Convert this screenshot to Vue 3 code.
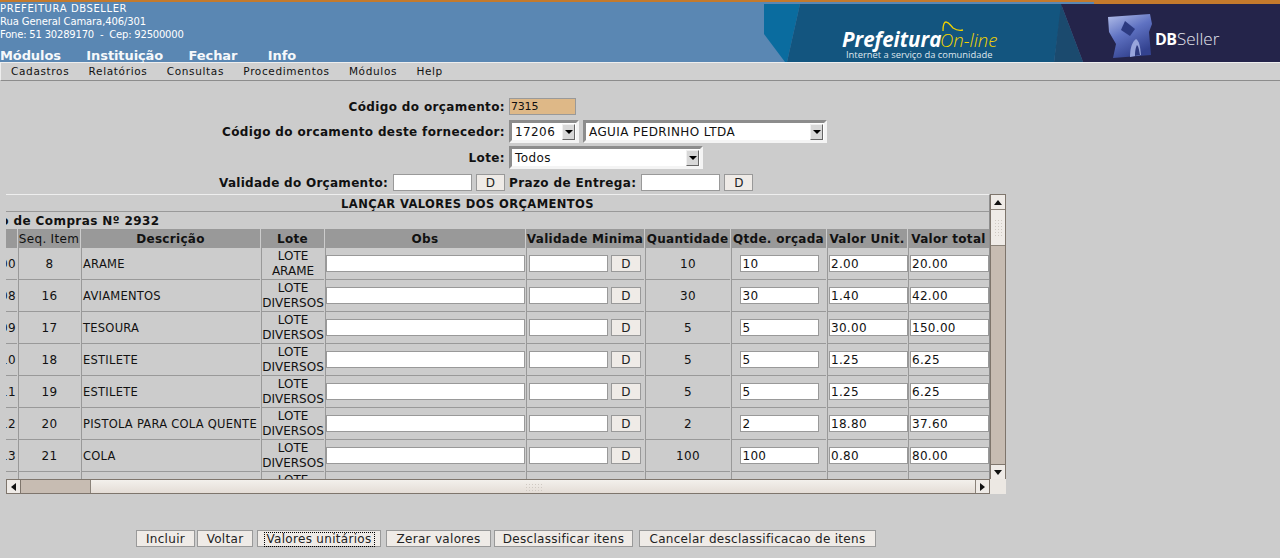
<template>
  <div class="page">
    <div class="top">
      <div class="top-left">
        <div class="org">
          <div class="org-1">PREFEITURA DBSELLER</div>
          <div class="org-2">Rua General Camara,406/301</div>
          <div class="org-3">Fone: 51 30289170 &nbsp;-&nbsp; Cep: 92500000</div>
        </div>
        <div class="top-menu">
          <span v-for="m in topMenu" :key="m">{{ m }}</span>
        </div>
      </div>
      <svg class="banner" width="516" height="60" viewBox="764 2 516 60">
        <defs>
          <linearGradient id="cube" x1="0" y1="0" x2="0.5" y2="1">
            <stop offset="0" stop-color="#b4c0ea" />
            <stop offset="0.5" stop-color="#5f72c2" />
            <stop offset="1" stop-color="#33428f" />
          </linearGradient>
        </defs>
        <rect x="764" y="2" width="516" height="60" fill="#5a87b3" />
        <polygon points="764,4 800,4 787,62 785,62 764,34" fill="#0a6c9f" />
        <polygon points="800,4 1062,4 1054,62 787,62" fill="#13557f" />
        <polygon points="1061,4 1083,62 1054,62" fill="#1b4a6e" />
        <polygon points="1061,4 1280,4 1280,62 1083,62" fill="#24244a" />
        <rect x="1094" y="2" width="186" height="2" fill="#c47a2c" />
        <text x="842" y="47" class="logo-a">Prefeitura</text>
        <text x="940" y="47" class="logo-b">On-line</text>
        <path d="M943 31c0-6 1-9 3-9 3 0 4 3 7 6 3 2 6 3 10 2" fill="none" stroke="#f2d200" stroke-width="1.3" />
        <text x="846" y="58" class="logo-c">Internet a serviço da comunidade</text>
        <polygon points="1108,17 1150,14 1152,24 1149,32 1151,55 1113,58 1116,44 1109,32" fill="url(#cube)" />
        <polygon points="1125,21 1135,29 1130,36 1121,30" fill="#2c3a80" />
        <path d="M1130 57c0-9 2-15 6-18 3 2 4 6 5 16z" fill="#98a5dc" />
        <path d="M1135 56c0-6 1-9 2-11 2 2 2 6 3 10z" fill="#2e3a7e" />
        <text x="1155" y="45" class="logo-d">DB</text>
        <text x="1177" y="45" class="logo-e">Seller</text>
      </svg>
    </div>

    <div class="menubar">
      <span v-for="m in subMenu" :key="m">{{ m }}</span>
    </div>

    <form class="form" @submit.prevent>
      <div class="row row-1">
        <label>Código do orçamento:</label>
        <input class="field code" value="7315" readonly />
      </div>
      <div class="row row-2">
        <label>Código do orcamento deste fornecedor:</label>
        <div class="sel w-70"><span>17206</span><i class="sel-btn"><b></b></i></div>
        <div class="sel w-244"><span>AGUIA PEDRINHO LTDA</span><i class="sel-btn"><b></b></i></div>
      </div>
      <div class="row row-3">
        <label>Lote:</label>
        <div class="sel w-194"><span>Todos</span><i class="sel-btn"><b></b></i></div>
      </div>
      <div class="dates">
        <label class="validade">Validade do Orçamento:</label>
        <input class="field date" />
        <button type="button" class="btn d">D</button>
        <label class="prazo">Prazo de Entrega:</label>
        <input class="field date" />
        <button type="button" class="btn d">D</button>
      </div>
    </form>

    <div class="frame">
      <div class="viewport">
        <div class="title">LANÇAR VALORES DOS ORÇAMENTOS</div>
        <div class="subtitle"><span>Processo de Compras Nº 2932</span></div>
        <table class="grid">
          <colgroup>
            <col v-for="(w, i) in colWidths" :key="i" :style="{ width: w + 'px' }" />
          </colgroup>
          <thead>
            <tr>
              <th></th>
              <th class="light">Seq. Item</th>
              <th>Descrição</th>
              <th>Lote</th>
              <th>Obs</th>
              <th>Validade Minima</th>
              <th>Quantidade</th>
              <th>Qtde. orçada</th>
              <th>Valor Unit.</th>
              <th>Valor total</th>
            </tr>
          </thead>
          <tbody>
            <tr v-for="r in rows" :key="r.seq">
              <td class="num"><div class="clip">{{ r.cod }}</div></td>
              <td class="c">{{ r.seq }}</td>
              <td class="desc">{{ r.desc }}</td>
              <td class="c lote">LOTE<br />{{ r.lote }}</td>
              <td class="c"><input class="field obs" /></td>
              <td class="val">
                <input class="field date" /><button type="button" class="btn d">D</button>
              </td>
              <td class="c">{{ r.qtd }}</td>
              <td class="c"><input class="field q" :value="r.qtd" /></td>
              <td class="c"><input class="field v" :value="r.unit" /></td>
              <td class="c"><input class="field v" :value="r.total" /></td>
            </tr>
            <tr class="cut">
              <td></td><td></td><td></td><td class="c lote">LOTE</td><td></td><td></td><td></td><td></td><td></td><td></td>
            </tr>
          </tbody>
        </table>
      </div>

      <div class="vbar">
        <div class="arrow-btn v-btn"><svg width="8" height="5" viewBox="0 0 8 5"><path d="M4 0l4 5H0z" /></svg></div>
        <div class="v-thumb"><div class="dots dots-v"></div></div>
        <div class="v-track"></div>
        <div class="arrow-btn v-btn"><svg width="8" height="5" viewBox="0 0 8 5"><path d="M4 5l4-5H0z" /></svg></div>
      </div>

      <div class="hbar">
        <div class="arrow-btn h-btn"><svg width="5" height="8" viewBox="0 0 5 8"><path d="M0 4l5-4v8z" /></svg></div>
        <div class="h-track"></div>
        <div class="h-thumb"><div class="dots dots-h"></div></div>
        <div class="arrow-btn h-btn"><svg width="5" height="8" viewBox="0 0 5 8"><path d="M5 4L0 0v8z" /></svg></div>
      </div>
      <div class="corner"></div>
    </div>

    <div class="actions">
      <button type="button" class="btn">Incluir</button>
      <button type="button" class="btn">Voltar</button>
      <button type="button" class="btn focus"><span>Valores unitários</span></button>
      <button type="button" class="btn">Zerar valores</button>
      <button type="button" class="btn">Desclassificar itens</button>
      <button type="button" class="btn">Cancelar desclassificacao de itens</button>
    </div>
  </div>
</template>

<script setup>
const topMenu = ['Módulos', 'Instituição', 'Fechar', 'Info']
const subMenu = ['Cadastros', 'Relatórios', 'Consultas', 'Procedimentos', 'Módulos', 'Help']

const colWidths = [54, 62, 179, 63, 200, 118, 85, 95, 80, 81]

const rows = [
  { cod: '100', seq: 8, desc: 'ARAME', lote: 'ARAME', qtd: 10, unit: '2.00', total: '20.00' },
  { cod: '108', seq: 16, desc: 'AVIAMENTOS', lote: 'DIVERSOS', qtd: 30, unit: '1.40', total: '42.00' },
  { cod: '109', seq: 17, desc: 'TESOURA', lote: 'DIVERSOS', qtd: 5, unit: '30.00', total: '150.00' },
  { cod: '110', seq: 18, desc: 'ESTILETE', lote: 'DIVERSOS', qtd: 5, unit: '1.25', total: '6.25' },
  { cod: '111', seq: 19, desc: 'ESTILETE', lote: 'DIVERSOS', qtd: 5, unit: '1.25', total: '6.25' },
  { cod: '112', seq: 20, desc: 'PISTOLA PARA COLA QUENTE', lote: 'DIVERSOS', qtd: 2, unit: '18.80', total: '37.60' },
  { cod: '113', seq: 21, desc: 'COLA', lote: 'DIVERSOS', qtd: 100, unit: '0.80', total: '80.00' }
]
</script>

<style>
html,
body {
  margin: 0;
  background: #cccccc;
}
</style>

<style scoped>
.page {
  width: 1280px;
  height: 558px;
  overflow: hidden;
  font-family: "DejaVu Sans", sans-serif;
  font-size: 12px;
  color: #111;
  background: #cccccc;
}

.top {
  display: flex;
  justify-content: space-between;
  height: 60px;
  border-top: 2px solid #c47a2c;
  background: #5a87b3;
  color: #fff;
}

.org {
  font-size: 10px;
  line-height: 13px;
}

.org-1 {
  letter-spacing: 0.6px;
}

.org-2 {
  letter-spacing: -0.1px;
}

.org-3 {
  letter-spacing: -0.2px;
}

.top-menu {
  display: flex;
  gap: 25.5px;
  margin-top: 8px;
  font-size: 13px;
  font-weight: bold;
  line-height: 14px;
  letter-spacing: -0.1px;
  opacity: 0.95;
}

.top-menu span:last-child {
  margin-left: 5px;
}

.banner {
  display: block;
}

.logo-a {
  font: italic bold 20.5px "Open Sans", sans-serif;
  fill: #fff;
}

.logo-b {
  font: italic 300 18.5px "Open Sans", sans-serif;
  fill: #f2d200;
}

.logo-c {
  font: 9.4px "Open Sans", sans-serif;
  fill: #dfe6ee;
}

.logo-d {
  font: bold 16px "Open Sans", sans-serif;
  letter-spacing: -0.5px;
  fill: #fff;
}

.logo-e {
  font: 300 17px "Open Sans", sans-serif;
  fill: #e6e6ee;
}

.menubar {
  display: flex;
  gap: 19.3px;
  align-items: center;
  height: 15px;
  padding: 0 0 2px 10px;
  border-top: 1px solid #eee;
  border-bottom: 1px solid #8c8c8c;
  border-left: 1px solid #eee;
  background: #d0d0d0;
  font-size: 10.5px;
  letter-spacing: 0.65px;
}

.form {
  padding-top: 17px;
}

.row {
  display: flex;
  align-items: center;
  gap: 4px;
}

.row label {
  width: 505px;
  text-align: right;
}

label {
  font-weight: bold;
  letter-spacing: 0.37px;
}

.row-1 {
  height: 17px;
}

.row-2 {
  height: 23px;
  margin-top: 5px;
}

.row-3 {
  height: 23px;
  margin-top: 3px;
}

.dates {
  display: flex;
  align-items: center;
  height: 17px;
  margin-top: 5px;
  padding-left: 219px;
}

.dates label {
  margin-right: 5px;
}

.dates .validade {
  letter-spacing: 0.28px;
}

.dates .btn {
  margin-left: 4px;
  margin-right: 4px;
}

.field {
  box-sizing: border-box;
  height: 17px;
  margin: 0;
  padding: 0 1px;
  border: 1px solid #999;
  background: #fff;
  color: #111;
  font: 12px "DejaVu Sans", sans-serif;
  letter-spacing: 0.3px;
  outline: none;
}

.code {
  width: 67px;
  font-size: 11px;
  letter-spacing: -0.2px;
  background: #deb887;
}

.date {
  width: 79px;
}

.obs {
  width: 199px;
}

.q {
  width: 79px;
  padding-left: 2px;
}

.v {
  width: 79px;
  margin-left: 1px;
}

.sel {
  display: flex;
  align-items: center;
  justify-content: space-between;
  box-sizing: border-box;
  height: 23px;
  padding-left: 3px;
  border: 3px solid;
  border-color: #8c8c8c #f4f4f4 #f4f4f4 #8c8c8c;
  background: #fff;
  letter-spacing: 0.4px;
}

.w-70 {
  width: 70px;
}

.w-244 {
  width: 244px;
}

.w-194 {
  width: 194px;
}

.sel-btn {
  display: flex;
  align-items: center;
  justify-content: center;
  box-sizing: border-box;
  width: 13px;
  height: 16px;
  margin-right: 1px;
  border: 1px solid;
  border-color: #f0f0f0 #666 #666 #f0f0f0;
  background: #d8d8d8;
}

.sel-btn b {
  width: 0;
  height: 0;
  border-top: 4px solid #000;
  border-left: 4px solid transparent;
  border-right: 4px solid transparent;
}

.btn {
  box-sizing: border-box;
  height: 17px;
  margin: 0;
  padding: 0;
  border: 1px solid #999;
  background: #efebe7;
  color: #222;
  font: 12px "DejaVu Sans", sans-serif;
  letter-spacing: 0.3px;
  line-height: 14px;
}

.btn.d {
  width: 29px;
}

.frame {
  display: grid;
  grid-template-columns: 984px 16px;
  grid-template-rows: 285px 15px;
  width: 1000px;
  margin: 3px 0 0 6px;
}

.viewport {
  overflow: hidden;
  box-sizing: border-box;
  border-top: 1px solid #eee;
  border-right: 1px solid #8e8e8e;
}

.title {
  height: 16px;
  border-bottom: 1px solid #999;
  padding-right: 60px;
  font-weight: bold;
  font-size: 11.5px;
  letter-spacing: 0.4px;
  line-height: 18px;
  text-align: center;
}

.subtitle {
  height: 17px;
  font-weight: bold;
  line-height: 19px;
  letter-spacing: 0.4px;
  white-space: nowrap;
}

.subtitle span {
  display: block;
  margin-left: -61px;
}

.grid {
  width: 937px;
  margin-left: -44px;
  table-layout: fixed;
  border-collapse: separate;
  border-spacing: 1px 0;
}

.grid th {
  height: 19px;
  padding: 0;
  background: #999;
  font-size: 12px;
  font-weight: bold;
  letter-spacing: 0.3px;
  white-space: nowrap;
  overflow: hidden;
}

.grid th.light {
  font-weight: normal;
}

.grid td {
  height: 31px;
  padding: 0;
  border-bottom: 1px solid #999;
  border-left: 1px solid #999;
  font-size: 12px;
  letter-spacing: 0.3px;
}

.grid .c {
  text-align: center;
}

.num {
  text-align: right;
}

.clip {
  padding-right: 1px;
  font-size: 12px;
}

.grid .desc {
  padding-left: 1px;
  font-size: 11.5px;
  letter-spacing: 0.25px;
  white-space: nowrap;
}

.grid .lote {
  height: 30px;
  padding-top: 1px;
  line-height: 15px;
  letter-spacing: 0;
}

.cut td {
  vertical-align: top;
}

.grid .val {
  padding-left: 2px;
  white-space: nowrap;
}

.val .btn.d {
  width: 30px;
  margin-left: 3px;
}

.vbar {
  display: flex;
  flex-direction: column;
  box-sizing: border-box;
  border: 1px solid #7e756c;
  border-bottom: 0;
}

.arrow-btn {
  display: flex;
  align-items: center;
  justify-content: center;
  box-sizing: border-box;
  background: #efebe7;
}

.arrow-btn svg {
  display: block;
  fill: #111;
}

.v-btn {
  height: 14px;
}

.v-thumb {
  display: flex;
  align-items: center;
  justify-content: center;
  height: 35px;
  border-top: 1px solid #8a8279;
  border-bottom: 1px solid #8a8279;
  background: #efebe7;
}

.v-track {
  flex: 1;
  border-bottom: 1px solid #7e756c;
  background: #c7bcb2;
}

.dots {
  background-image: radial-gradient(#cfc9c2 0.7px, transparent 0.8px);
  background-size: 3px 3px;
}

.dots-v {
  width: 8px;
  height: 18px;
}

.dots-h {
  width: 17px;
  height: 8px;
}

.hbar {
  display: flex;
  box-sizing: border-box;
  border: 1px solid #7e756c;
}

.h-btn {
  width: 13px;
}

.h-track {
  width: 69px;
  border-left: 1px solid #7e756c;
  background: #c7bcb2;
}

.h-thumb {
  display: flex;
  flex: 1;
  align-items: center;
  justify-content: center;
  border-left: 1px solid #8a8279;
  border-right: 1px solid #8a8279;
  background: linear-gradient(#f3f0ec, #e4ddd6);
}

.corner {
  background: #ece8e3;
}

.actions {
  display: flex;
  margin-top: 36px;
  padding-left: 136px;
}

.actions .btn:nth-child(1) {
  width: 59px;
}

.actions .btn:nth-child(2) {
  width: 56px;
  margin-left: 2px;
}

.actions .btn:nth-child(3) {
  width: 124px;
  margin-left: 4px;
}

.actions .btn:nth-child(4) {
  width: 105px;
  margin-left: 5px;
}

.actions .btn:nth-child(5) {
  width: 139px;
  margin-left: 3px;
}

.actions .btn:nth-child(6) {
  width: 237px;
  margin-left: 6px;
}

.focus span {
  display: inline-block;
  padding: 0 2px;
  line-height: 13px;
  outline: 1px dotted #000;
}
</style>
